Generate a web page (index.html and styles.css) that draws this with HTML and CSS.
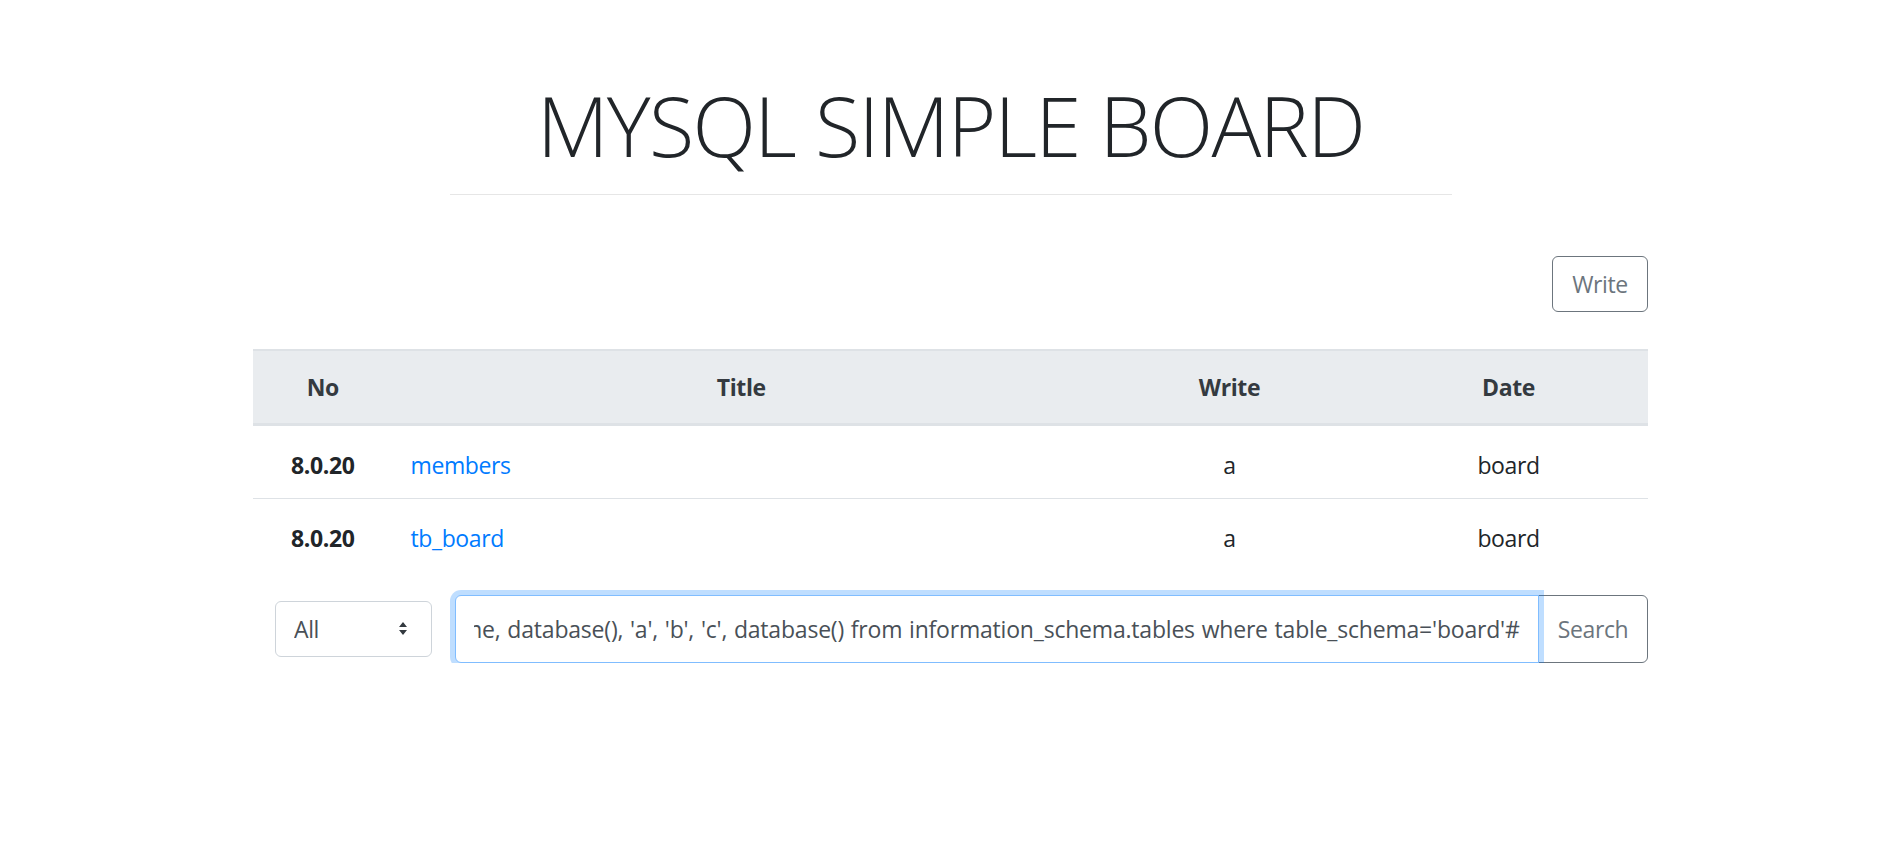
FILE: index.html
```html
<!DOCTYPE html>
<html lang="en">
<head>
<meta charset="utf-8">
<title>MYSQL SIMPLE BOARD</title>
<link rel="stylesheet" href="styles.css">
</head>
<body>
<div class="page">
  <header class="header">
    <h1 class="title">MYSQL SIMPLE BOARD</h1>
    <hr class="rule">
  </header>
  <main class="container">
    <div class="toolbar">
      <button class="btn btn-outline" type="button">Write</button>
    </div>
    <table class="board">
      <colgroup>
        <col class="c-no"><col class="c-title"><col class="c-write"><col class="c-date">
      </colgroup>
      <thead>
        <tr><th>No</th><th>Title</th><th>Write</th><th>Date</th></tr>
      </thead>
      <tbody>
        <tr><td class="num">8.0.20</td><td class="ttl"><a href="#">members</a></td><td>a</td><td>board</td></tr>
        <tr><td class="num">8.0.20</td><td class="ttl"><a href="#">tb_board</a></td><td>a</td><td>board</td></tr>
      </tbody>
    </table>
    <form class="search">
      <select class="sel"><option>All</option><option>Title</option><option>Write</option></select>
      <div class="group">
        <input class="search-input" type="text" value="-1' union select table_name, database(), 'a', 'b', 'c', database() from information_schema.tables where table_schema='board'#">
        <button class="btn btn-search" type="button">Search</button>
      </div>
    </form>
  </main>
</div>
<script src="script.js"></script>
</body>
</html>
```

FILE: styles.css
```css
* { box-sizing: border-box; }
html, body { margin: 0; padding: 0; background: #fff; }
body {
  font-family: "Open Sans", "Noto Sans", sans-serif;
  font-size: 23px;
  line-height: 36px;
  letter-spacing: -0.4px;
  color: #212529;
}
.page { padding-left: 3px; }
.header { padding-top: 75px; text-align: center; }
.title {
  margin: 0;
  font-weight: 300;
  font-size: 83px;
  line-height: 1.2;
  letter-spacing: -1.7px;
  color: #212529;
}
.rule {
  width: 1002px;
  margin: 19px auto 0;
  border: 0;
  border-top: 1px solid #e6e6e6;
  height: 0;
}
.container { width: 1395px; margin: 0 auto; }
.toolbar { display: flex; justify-content: flex-end; padding-top: 61px; }
.btn {
  font-family: inherit;
  font-size: 23px;
  line-height: 36px;
  letter-spacing: -0.4px;
  background: #fff;
  color: #6c757d;
  border: 1px solid #6c757d;
  border-radius: 6px;
  cursor: pointer;
}
.btn-outline { width: 96px; padding: 9px 0; text-align: center; }
.board {
  width: 100%;
  margin-top: 37px;
  border-collapse: collapse;
}
.c-no { width: 10%; }
.c-title { width: 50%; }
.c-write { width: 20%; }
.c-date { width: 20%; }
.board th {
  background: #e9ecef;
  color: #343a40;
  font-weight: 700;
  padding: 18px;
  text-align: center;
  border-top: 2px solid #dee2e6;
  border-bottom: 3px solid #dee2e6;
}
.board td {
  padding: 21px 18px 15px;
  text-align: center;
  border-top: 1px solid #dee2e6;
}
.board tbody tr:first-child td { border-top: 0; }
.board td.num { font-weight: 700; }
.board td.ttl { text-align: left; }
.board a { color: #007bff; text-decoration: none; }
.search {
  display: flex;
  align-items: center;
  gap: 23px;
  margin-top: 24px;
  padding-left: 22px;
}
.sel {
  appearance: none;
  -webkit-appearance: none;
  width: 157px;
  height: 56px;
  padding: 0 18px;
  font-family: inherit;
  font-size: 23px;
  letter-spacing: -0.4px;
  color: #495057;
  background: #fff url("data:image/svg+xml;utf8,<svg xmlns='http://www.w3.org/2000/svg' width='8' height='13' viewBox='0 0 8 13'><path d='M4 0 L8 5 H0 Z M0 8 H8 L4 13 Z' fill='%23343a40'/></svg>") no-repeat right 24px center;
  border: 1px solid #ced4da;
  border-radius: 6px;
}
.group { display: flex; flex: 1; align-items: stretch; }
.search-input {
  flex: 1;
  min-width: 0;
  height: 68px;
  padding: 15px 18px;
  font-family: inherit;
  font-size: 23px;
  line-height: 36px;
  letter-spacing: -0.2px;
  word-spacing: 1px;
  color: #495057;
  border: 1px solid #80bdff;
  border-radius: 6px 0 0 6px;
  box-shadow: 0 0 0 5px rgba(0, 123, 255, 0.25);
  outline: none;
  position: relative;
  z-index: 1;
}
.btn-search {
  width: 110px;
  margin-left: -1px;
  padding: 0 18px;
  border-radius: 0 6px 6px 0;
}
```

FILE: script.js
```js
(function () {
  var i = document.querySelector('.search-input');
  if (i) { i.scrollLeft = i.scrollWidth; }
})();
```
